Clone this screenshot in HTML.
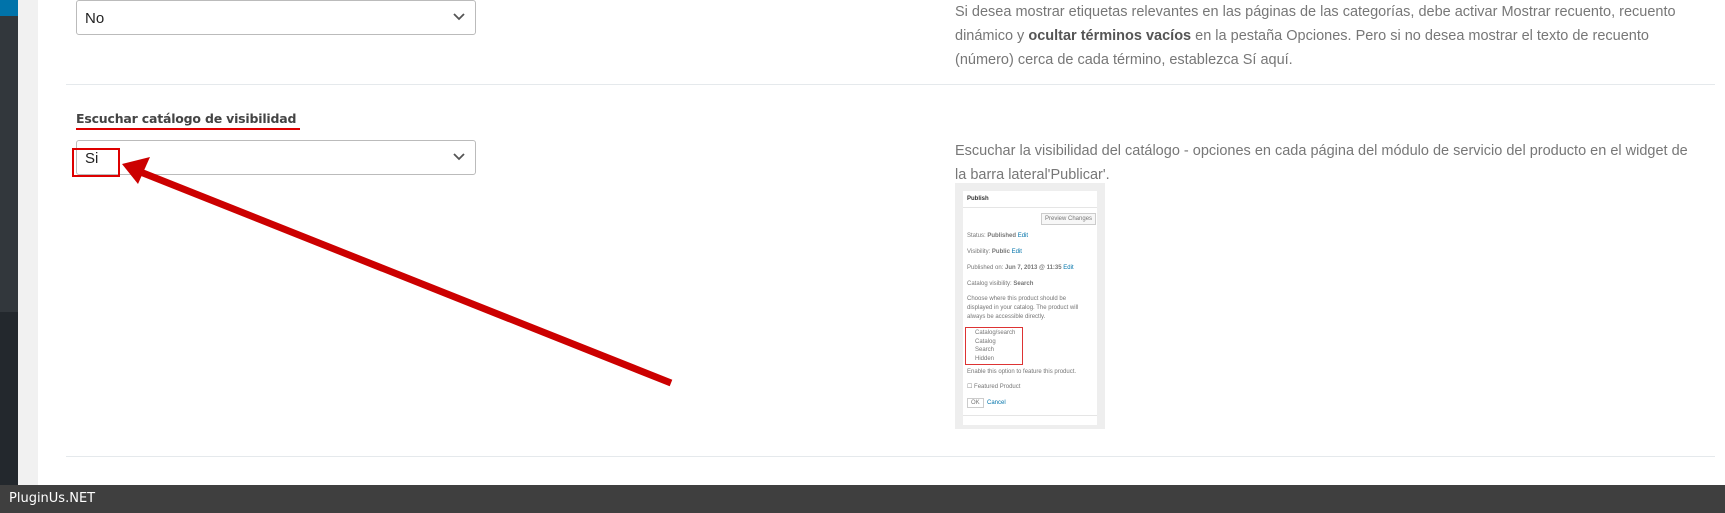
<!DOCTYPE html>
<html><head><meta charset="utf-8"><style>
*{margin:0;padding:0;box-sizing:border-box}
body{width:1725px;height:513px;overflow:hidden;background:#fff;font-family:"Liberation Sans",sans-serif;position:relative}
.a{position:absolute}
.sel{position:absolute;left:76px;width:400px;height:35px;border:1px solid #bbb;border-radius:3px;background:#fff;font-size:15px;color:#222;padding:9px 0 0 8px}
.sel svg{position:absolute;right:10px;top:12px}
.desc{position:absolute;left:955px;width:740px;font-size:14.5px;line-height:24px;color:#777}
.pub{position:absolute;left:955px;top:183px;width:150px;height:246px;background:#eee}
.pb{position:absolute;left:8px;top:8px;width:134px;height:234px;background:#fff;font-size:6px;color:#777}
.pb div{position:absolute;left:4px;white-space:nowrap}
</style></head><body>
<div class="a" style="left:0;top:0;width:18px;height:312px;background:#32373c"></div>
<div class="a" style="left:0;top:0;width:18px;height:16px;background:#0073aa"></div>
<div class="a" style="left:0;top:312px;width:18px;height:201px;background:#23282d"></div>
<div class="a" style="left:18px;top:0;width:20px;height:513px;background:#f1f1f1"></div>

<div class="sel" style="top:0">No<svg width="12" height="8"><path d="M1 1l5 5 5-5" stroke="#555" stroke-width="1.8" fill="none"/></svg></div>
<div class="a" style="left:66px;top:84px;width:1649px;height:1px;background:#e5e9ec"></div>
<div class="a" style="left:76px;top:111px;font-size:12.5px;font-family:'DejaVu Sans',sans-serif;font-weight:600;color:#444;letter-spacing:-0.2px">Escuchar catálogo de visibilidad</div>
<div class="a" style="left:76px;top:128px;width:224px;height:2px;background:#d00"></div>
<div class="sel" style="top:140px">Si<svg width="12" height="8"><path d="M1 1l5 5 5-5" stroke="#555" stroke-width="1.8" fill="none"/></svg></div>
<div class="a" style="left:72px;top:148px;width:48px;height:29px;border:2px solid #d00"></div>
<svg class="a" style="left:0;top:0" width="1725" height="513"><line x1="671" y1="383" x2="138" y2="171" stroke="#cc0000" stroke-width="7"/><polygon points="122,164 150,157 138,184" fill="#cc0000"/></svg>
<div class="a" style="left:66px;top:456px;width:1649px;height:1px;background:#e5e9ec"></div>

<div class="desc" style="top:0">Si desea mostrar etiquetas relevantes en las páginas de las categorías, debe activar Mostrar recuento, recuento dinámico y <b style="color:#555">ocultar términos vacíos</b> en la pestaña Opciones. Pero si no desea mostrar el texto de recuento (número) cerca de cada término, establezca Sí aquí.</div>
<div class="desc" style="top:139px">Escuchar la visibilidad del catálogo - opciones en cada página del módulo de servicio del producto en el widget de la barra lateral'Publicar'.</div>

<div class="pub"><div class="pb">
<div style="top:5px;font-weight:bold;color:#333">Publish</div>
<div style="top:16px;left:0;width:134px;height:1px;background:#e5e5e5"></div>
<div style="top:22px;left:78px;border:1px solid #ccc;padding:2px 3px;background:#f7f7f7">Preview Changes</div>
<div style="top:42px">Status: <b>Published</b> <span style="color:#0073aa">Edit</span></div>
<div style="top:58px">Visibility: <b>Public</b> <span style="color:#0073aa">Edit</span></div>
<div style="top:74px">Published on: <b>Jun 7, 2013 @ 11:35</b> <span style="color:#0073aa">Edit</span></div>
<div style="top:90px">Catalog visibility: <b>Search</b></div>
<div style="top:104px;line-height:9px">Choose where this product should be<br>displayed in your catalog. The product will<br>always be accessible directly.</div>
<div style="top:136px;left:2px;width:58px;height:38px;border:1px solid #d33"></div>
<div style="top:138px;left:12px;line-height:8.5px">Catalog/search<br>Catalog<br>Search<br>Hidden</div>
<div style="top:178px">Enable this option to feature this product.</div>
<div style="top:192px">☐ Featured Product</div>
<div style="top:207px;border:1px solid #ccc;padding:1px 3px">OK</div><div style="top:209px;left:24px;color:#0073aa">Cancel</div>
<div style="top:224px;left:0;width:134px;height:1px;background:#e5e5e5"></div>
</div></div>

<div class="a" style="left:0;top:485px;width:1725px;height:28px;background:#3f3f3f;color:#fff;font-size:13px;font-family:'DejaVu Sans',sans-serif;padding:6px 0 0 9px">PluginUs.NET</div>
</body></html>
